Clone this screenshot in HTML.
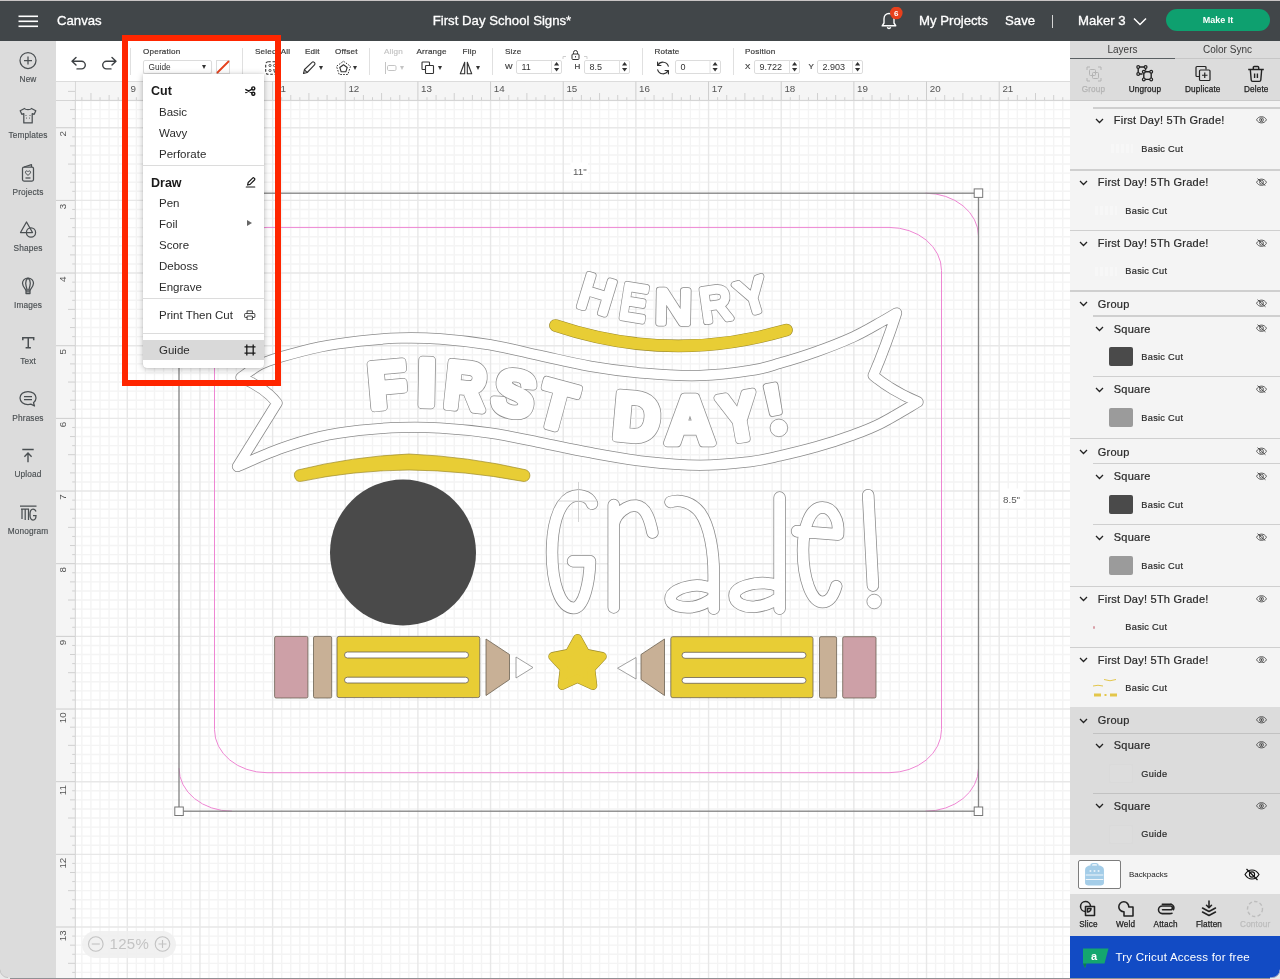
<!DOCTYPE html>
<html><head><meta charset="utf-8"><title>Cricut Design Space</title>
<style>
*{box-sizing:border-box;margin:0;padding:0}
html,body{width:1280px;height:979px;overflow:hidden;background:#fff}
body{position:relative;font-family:"Liberation Sans",sans-serif;color:#333;-webkit-font-smoothing:antialiased}
.abs{position:absolute}
body>*{will-change:transform}
#topbar{position:absolute;left:0;top:0;width:1280px;height:41px;background:#414649;border-top:1px solid #c9c5c5;color:#fff}
#topbar .t{position:absolute;top:0;height:40px;line-height:39px;font-size:13.2px;white-space:nowrap;color:#fff;-webkit-text-stroke:.3px #fff}
#sidebar{position:absolute;left:0;top:41px;width:56px;height:938px;background:#dcdcdc}
.sb{position:absolute;left:0;width:56px;text-align:center;font-size:8.300px;letter-spacing:.12px;color:#4a4f52;line-height:10px;-webkit-text-stroke:.15px currentColor}
.sbi{position:absolute;left:0;width:56px}
#toolbar{position:absolute;left:56px;top:41px;width:1014px;height:40px;background:#fff}
.tl{position:absolute;font-size:8.100px;letter-spacing:.2px;-webkit-text-stroke:.2px currentColor;color:#3a3a3a;line-height:9px;white-space:nowrap}
.inp{position:absolute;height:13px;border:1px solid #dcdcdc;border-radius:2px;background:#fff;font-size:9px;line-height:12px;color:#333;padding-left:4.500px}
.sep{position:absolute;top:48px;width:1px;height:27px;background:#e0e0e0}
#rp{position:absolute;left:1070px;top:41px;width:210px;height:938px;background:#f4f4f4;overflow:hidden}
</style></head><body>
<div id="topbar">
 <svg class="abs" style="left:18px;top:14px" width="20" height="13" viewBox="0 0 20 13"><g stroke="#fff" stroke-width="1.6"><line x1=".5" y1="1.300" x2="20" y2="1.300"/><line x1=".5" y1="6.300" x2="20" y2="6.300"/><line x1=".5" y1="11.300" x2="20" y2="11.300"/></g></svg>
 <div class="t" style="left:57px">Canvas</div>
 <div class="t" style="left:402px;width:200px;text-align:center">First Day School Signs*</div>
 <svg class="abs" style="left:878px;top:6px" width="28" height="28" viewBox="0 0 28 28"><path d="M11 6.5c-3 0-5 2.3-5 5.2v4.300l-1.800 2.800h13.600l-1.800-2.800v-4.300c0-2.900-2-5.200-5-5.200z" fill="none" stroke="#fff" stroke-width="1.4" stroke-linejoin="round"/><path d="M9.300 20.300a1.800 1.800 0 0 0 3.400 0" fill="none" stroke="#fff" stroke-width="1.300"/><circle cx="18.300" cy="6" r="6.300" fill="#e8401c"/><text x="18.300" y="8.900" font-size="8" font-weight="bold" fill="#fff" text-anchor="middle" font-family="Liberation Sans">6</text></svg>
 <div class="t" style="left:919px">My Projects</div>
 <div class="t" style="left:1005px">Save</div>
 <div class="abs" style="left:1051.500px;top:14px;width:1.300px;height:13px;background:#d4d4d4"></div>
 <div class="t" style="left:1078px">Maker 3</div>
 <svg class="abs" style="left:1133px;top:16px" width="14" height="9" viewBox="0 0 14 9"><path d="M1 1.500l6 6 6-6" fill="none" stroke="#fff" stroke-width="1.500"/></svg>
 <div class="abs" style="left:1166px;top:8px;width:104px;height:22px;border-radius:11px;background:#0ea06f;color:#fff;font-size:9px;font-weight:bold;text-align:center;line-height:22px">Make It</div>
</div>
<div id="sidebar">
 <!-- New -->
 <svg class="sbi" style="top:9px" width="56" height="20" viewBox="0 0 56 20"><g fill="none" stroke="#4a4f52" stroke-width="1.250"><circle cx="28" cy="10.500" r="8"/><path d="M28 6.500v8M24 10.500h8"/></g></svg>
 <div class="sb" style="top:33px">New</div>
 <!-- Templates -->
 <svg class="sbi" style="top:65px" width="56" height="20" viewBox="0 0 56 20"><g fill="none" stroke="#4a4f52" stroke-width="1.250" stroke-linejoin="round"><path d="M24.500 2.500c1 1.600 6 1.600 7 0l4.300 2.200-1.600 3.600-2-.7v9.300h-8.400V7.600l-2 .7-1.600-3.600z"/><path d="M26 9.500h.01M30 9.500h.01M26.500 12h.01M29.500 12h.01" stroke-linecap="round" stroke-width="1.200"/></g></svg>
 <div class="sb" style="top:89px">Templates</div>
 <!-- Projects -->
 <svg class="sbi" style="top:121px" width="56" height="22" viewBox="0 0 56 22"><g fill="none" stroke="#4a4f52" stroke-width="1.250" stroke-linejoin="round"><rect x="22.500" y="5" width="11" height="14" rx="1.500"/><path d="M24 5l7.500-2.300V5"/><path d="M28 13.300c-1.400-1-2.600-2-2.600-3.100 0-1.500 2-1.800 2.600-.5.600-1.300 2.600-1 2.600.5 0 1.100-1.200 2.100-2.600 3.100z" stroke-width="1"/><path d="M25.500 16h5"/></g></svg>
 <div class="sb" style="top:146px">Projects</div>
 <!-- Shapes -->
 <svg class="sbi" style="top:178px" width="56" height="22" viewBox="0 0 56 22"><g fill="none" stroke="#4a4f52" stroke-width="1.250" stroke-linejoin="round"><path d="M26.500 3l6 10.500h-12z"/><circle cx="31" cy="13.500" r="4.600"/></g></svg>
 <div class="sb" style="top:202px">Shapes</div>
 <!-- Images -->
 <svg class="sbi" style="top:234px" width="56" height="22" viewBox="0 0 56 22"><g fill="none" stroke="#4a4f52" stroke-width="1.250" stroke-linejoin="round"><path d="M28 3c-3.300 0-5.500 2.500-5.500 5.300 0 2.700 2 4.700 3.500 6.700h4c1.500-2 3.500-4 3.500-6.700C33.500 5.500 31.300 3 28 3z"/><path d="M28 3c-1.600 1.200-2.300 3.300-2.300 5.300s.8 4.500 1.500 6.700M28 3c1.600 1.200 2.300 3.300 2.300 5.300s-.8 4.500-1.500 6.700"/><path d="M26 15v3.500h4V15M26 16.800h4"/></g></svg>
 <div class="sb" style="top:259px">Images</div>
 <!-- Text -->
 <svg class="sbi" style="top:291px" width="56" height="22" viewBox="0 0 56 22"><g fill="none" stroke="#4a4f52" stroke-width="1.500"><path d="M22.800 8.300V5.700h10.900V8.300M28.250 5.700v10M25.600 15.700h5.300"/></g></svg>
 <div class="sb" style="top:315px">Text</div>
 <!-- Phrases -->
 <svg class="sbi" style="top:347px" width="56" height="22" viewBox="0 0 56 22"><g fill="none" stroke="#4a4f52" stroke-width="1.250" stroke-linejoin="round"><path d="M28 3.500c-4.400 0-8 2.800-8 6.500s3.600 6.500 8 6.500c1 0 2-.15 2.900-.4l3.600 1.900-1-3.200c1.500-1.200 2.500-2.900 2.500-4.800 0-3.700-3.600-6.500-8-6.500z"/><path d="M24 8.500h8M24 11.500h8"/></g></svg>
 <div class="sb" style="top:372px">Phrases</div>
 <!-- Upload -->
 <svg class="sbi" style="top:404px" width="56" height="22" viewBox="0 0 56 22"><g fill="none" stroke="#4a4f52" stroke-width="1.400"><path d="M22.300 4.500h11.400M28 17.200V8.200M24.400 11.700l3.600-3.600 3.600 3.600"/></g></svg>
 <div class="sb" style="top:428px">Upload</div>
 <!-- Monogram -->
 <svg class="sbi" style="top:461px" width="56" height="22" viewBox="0 0 56 22"><g fill="none" stroke="#4a4f52" stroke-width="1.250"><path d="M20 4h16.500M21 7h8M22 7v10M25.200 7v11M28.500 7v11M36 9.500c-.5-1.600-1.500-2.500-3-2.500-2 0-3 1.800-3 5.500s1 5.500 3 5.500c1.800 0 3-1.300 3-4.500h-3"/></g></svg>
 <div class="sb" style="top:485px">Monogram</div>
</div>
<svg class="abs" style="left:56px;top:81px" width="1014" height="898" viewBox="56 81 1014 898" font-family="Liberation Sans" shape-rendering="auto">
<rect x="56" y="81" width="1014" height="898" fill="#fff"/>
<path d="M81.86 100V979M90.94 100V979M100.02 100V979M109.11 100V979M118.19 100V979M136.35 100V979M145.44 100V979M154.52 100V979M163.60 100V979M172.68 100V979M181.76 100V979M190.85 100V979M209.01 100V979M218.10 100V979M227.18 100V979M236.26 100V979M245.34 100V979M254.42 100V979M263.51 100V979M281.67 100V979M290.75 100V979M299.84 100V979M308.92 100V979M318.00 100V979M327.09 100V979M336.17 100V979M354.33 100V979M363.41 100V979M372.50 100V979M381.58 100V979M390.66 100V979M399.75 100V979M408.83 100V979M426.99 100V979M436.08 100V979M445.16 100V979M454.24 100V979M463.32 100V979M472.40 100V979M481.49 100V979M499.65 100V979M508.74 100V979M517.82 100V979M526.90 100V979M535.98 100V979M545.06 100V979M554.15 100V979M572.31 100V979M581.40 100V979M590.48 100V979M599.56 100V979M608.64 100V979M617.73 100V979M626.81 100V979M644.97 100V979M654.05 100V979M663.14 100V979M672.22 100V979M681.30 100V979M690.38 100V979M699.47 100V979M717.63 100V979M726.72 100V979M735.80 100V979M744.88 100V979M753.96 100V979M763.04 100V979M772.13 100V979M790.29 100V979M799.37 100V979M808.46 100V979M817.54 100V979M826.62 100V979M835.71 100V979M844.79 100V979M862.95 100V979M872.03 100V979M881.12 100V979M890.20 100V979M899.28 100V979M908.36 100V979M917.45 100V979M935.61 100V979M944.70 100V979M953.78 100V979M962.86 100V979M971.94 100V979M981.02 100V979M990.11 100V979M1008.27 100V979M1017.35 100V979M1026.44 100V979M1035.52 100V979M1044.60 100V979M1053.68 100V979M1062.77 100V979M75 100.49H1070M75 109.58H1070M75 118.66H1070M75 136.82H1070M75 145.91H1070M75 154.99H1070M75 164.07H1070M75 173.15H1070M75 182.24H1070M75 191.32H1070M75 209.48H1070M75 218.56H1070M75 227.65H1070M75 236.73H1070M75 245.81H1070M75 254.89H1070M75 263.98H1070M75 282.14H1070M75 291.23H1070M75 300.31H1070M75 309.39H1070M75 318.47H1070M75 327.56H1070M75 336.64H1070M75 354.80H1070M75 363.88H1070M75 372.97H1070M75 382.05H1070M75 391.13H1070M75 400.21H1070M75 409.30H1070M75 427.46H1070M75 436.55H1070M75 445.63H1070M75 454.71H1070M75 463.79H1070M75 472.88H1070M75 481.96H1070M75 500.12H1070M75 509.20H1070M75 518.29H1070M75 527.37H1070M75 536.45H1070M75 545.54H1070M75 554.62H1070M75 572.78H1070M75 581.87H1070M75 590.95H1070M75 600.03H1070M75 609.11H1070M75 618.19H1070M75 627.28H1070M75 645.44H1070M75 654.53H1070M75 663.61H1070M75 672.69H1070M75 681.77H1070M75 690.86H1070M75 699.94H1070M75 718.10H1070M75 727.18H1070M75 736.27H1070M75 745.35H1070M75 754.43H1070M75 763.51H1070M75 772.60H1070M75 790.76H1070M75 799.85H1070M75 808.93H1070M75 818.01H1070M75 827.09H1070M75 836.17H1070M75 845.26H1070M75 863.42H1070M75 872.50H1070M75 881.59H1070M75 890.67H1070M75 899.75H1070M75 908.84H1070M75 917.92H1070M75 936.08H1070M75 945.16H1070M75 954.25H1070M75 963.33H1070M75 972.41H1070" stroke="#f4f4f4" stroke-width="1.400" fill="none"/>
<path d="M127.27 100V979M199.93 100V979M272.59 100V979M345.25 100V979M417.91 100V979M490.57 100V979M563.23 100V979M635.89 100V979M708.55 100V979M781.21 100V979M853.87 100V979M926.53 100V979M999.19 100V979M1071.85 100V979M75 127.74H1070M75 200.40H1070M75 273.06H1070M75 345.72H1070M75 418.38H1070M75 491.04H1070M75 563.70H1070M75 636.36H1070M75 709.02H1070M75 781.68H1070M75 854.34H1070M75 927.00H1070" stroke="#e8e8e8" stroke-width="1.400" fill="none"/>
<!--ART-->
<rect x="56" y="81" width="1014" height="19.500" fill="#f5f5f5"/>
<rect x="56" y="81" width="19.500" height="898" fill="#f5f5f5"/>
<path d="M56 81.500H1070" stroke="#dcdcdc" stroke-width="1"/>
<path d="M56 100.400H1070M75.300 81V979" stroke="#d2d2d2" stroke-width="1" fill="none"/>
<path d="M81.86 97.200V100M90.94 93V100M100.02 97.200V100M109.11 95V100M118.19 97.200V100M136.35 97.200V100M145.44 95V100M154.52 97.200V100M163.60 93V100M172.68 97.200V100M181.76 95V100M190.85 97.200V100M209.01 97.200V100M218.10 95V100M227.18 97.200V100M236.26 93V100M245.34 97.200V100M254.42 95V100M263.51 97.200V100M281.67 97.200V100M290.75 95V100M299.84 97.200V100M308.92 93V100M318.00 97.200V100M327.09 95V100M336.17 97.200V100M354.33 97.200V100M363.41 95V100M372.50 97.200V100M381.58 93V100M390.66 97.200V100M399.75 95V100M408.83 97.200V100M426.99 97.200V100M436.08 95V100M445.16 97.200V100M454.24 93V100M463.32 97.200V100M472.40 95V100M481.49 97.200V100M499.65 97.200V100M508.74 95V100M517.82 97.200V100M526.90 93V100M535.98 97.200V100M545.06 95V100M554.15 97.200V100M572.31 97.200V100M581.40 95V100M590.48 97.200V100M599.56 93V100M608.64 97.200V100M617.73 95V100M626.81 97.200V100M644.97 97.200V100M654.05 95V100M663.14 97.200V100M672.22 93V100M681.30 97.200V100M690.38 95V100M699.47 97.200V100M717.63 97.200V100M726.72 95V100M735.80 97.200V100M744.88 93V100M753.96 97.200V100M763.04 95V100M772.13 97.200V100M790.29 97.200V100M799.37 95V100M808.46 97.200V100M817.54 93V100M826.62 97.200V100M835.71 95V100M844.79 97.200V100M862.95 97.200V100M872.03 95V100M881.12 97.200V100M890.20 93V100M899.28 97.200V100M908.36 95V100M917.45 97.200V100M935.61 97.200V100M944.70 95V100M953.78 97.200V100M962.86 93V100M971.94 97.200V100M981.02 95V100M990.11 97.200V100M1008.27 97.200V100M1017.35 95V100M1026.44 97.200V100M1035.52 93V100M1044.60 97.200V100M1053.68 95V100M1062.77 97.200V100M72.200 100.49H75M70 109.58H75M72.200 118.66H75M72.200 136.82H75M70 145.91H75M72.200 154.99H75M68 164.07H75M72.200 173.15H75M70 182.24H75M72.200 191.32H75M72.200 209.48H75M70 218.56H75M72.200 227.65H75M68 236.73H75M72.200 245.81H75M70 254.89H75M72.200 263.98H75M72.200 282.14H75M70 291.23H75M72.200 300.31H75M68 309.39H75M72.200 318.47H75M70 327.56H75M72.200 336.64H75M72.200 354.80H75M70 363.88H75M72.200 372.97H75M68 382.05H75M72.200 391.13H75M70 400.21H75M72.200 409.30H75M72.200 427.46H75M70 436.55H75M72.200 445.63H75M68 454.71H75M72.200 463.79H75M70 472.88H75M72.200 481.96H75M72.200 500.12H75M70 509.20H75M72.200 518.29H75M68 527.37H75M72.200 536.45H75M70 545.54H75M72.200 554.62H75M72.200 572.78H75M70 581.87H75M72.200 590.95H75M68 600.03H75M72.200 609.11H75M70 618.19H75M72.200 627.28H75M72.200 645.44H75M70 654.53H75M72.200 663.61H75M68 672.69H75M72.200 681.77H75M70 690.86H75M72.200 699.94H75M72.200 718.10H75M70 727.18H75M72.200 736.27H75M68 745.35H75M72.200 754.43H75M70 763.51H75M72.200 772.60H75M72.200 790.76H75M70 799.85H75M72.200 808.93H75M68 818.01H75M72.200 827.09H75M70 836.17H75M72.200 845.26H75M72.200 863.42H75M70 872.50H75M72.200 881.59H75M68 890.67H75M72.200 899.75H75M70 908.84H75M72.200 917.92H75M72.200 936.08H75M70 945.16H75M72.200 954.25H75M68 963.33H75M72.200 972.41H75" stroke="#d0d0d0" stroke-width="1" fill="none"/>
<path d="M127.27 81.500V100M199.93 81.500V100M272.59 81.500V100M345.25 81.500V100M417.91 81.500V100M490.57 81.500V100M563.23 81.500V100M635.89 81.500V100M708.55 81.500V100M781.21 81.500V100M853.87 81.500V100M926.53 81.500V100M999.19 81.500V100M1071.85 81.500V100M56 127.74H75M56 200.40H75M56 273.06H75M56 345.72H75M56 418.38H75M56 491.04H75M56 563.70H75M56 636.36H75M56 709.02H75M56 781.68H75M56 854.34H75M56 927.00H75" stroke="#cdcdcd" stroke-width="1" fill="none"/>
<text x="130.5" y="92.300" font-size="9.800" fill="#555">9</text>
<text x="203.1" y="92.300" font-size="9.800" fill="#555">10</text>
<text x="275.8" y="92.300" font-size="9.800" fill="#555">11</text>
<text x="348.4" y="92.300" font-size="9.800" fill="#555">12</text>
<text x="421.1" y="92.300" font-size="9.800" fill="#555">13</text>
<text x="493.8" y="92.300" font-size="9.800" fill="#555">14</text>
<text x="566.4" y="92.300" font-size="9.800" fill="#555">15</text>
<text x="639.1" y="92.300" font-size="9.800" fill="#555">16</text>
<text x="711.8" y="92.300" font-size="9.800" fill="#555">17</text>
<text x="784.4" y="92.300" font-size="9.800" fill="#555">18</text>
<text x="857.1" y="92.300" font-size="9.800" fill="#555">19</text>
<text x="929.7" y="92.300" font-size="9.800" fill="#555">20</text>
<text x="1002.4" y="92.300" font-size="9.800" fill="#555">21</text>
<text transform="translate(66.4 131.1) rotate(-90)" font-size="9.800" fill="#555" text-anchor="end">2</text>
<text transform="translate(66.4 203.8) rotate(-90)" font-size="9.800" fill="#555" text-anchor="end">3</text>
<text transform="translate(66.4 276.5) rotate(-90)" font-size="9.800" fill="#555" text-anchor="end">4</text>
<text transform="translate(66.4 349.1) rotate(-90)" font-size="9.800" fill="#555" text-anchor="end">5</text>
<text transform="translate(66.4 421.8) rotate(-90)" font-size="9.800" fill="#555" text-anchor="end">6</text>
<text transform="translate(66.4 494.4) rotate(-90)" font-size="9.800" fill="#555" text-anchor="end">7</text>
<text transform="translate(66.4 567.1) rotate(-90)" font-size="9.800" fill="#555" text-anchor="end">8</text>
<text transform="translate(66.4 639.8) rotate(-90)" font-size="9.800" fill="#555" text-anchor="end">9</text>
<text transform="translate(66.4 712.4) rotate(-90)" font-size="9.800" fill="#555" text-anchor="end">10</text>
<text transform="translate(66.4 785.1) rotate(-90)" font-size="9.800" fill="#555" text-anchor="end">11</text>
<text transform="translate(66.4 857.7) rotate(-90)" font-size="9.800" fill="#555" text-anchor="end">12</text>
<text transform="translate(66.4 930.4) rotate(-90)" font-size="9.800" fill="#555" text-anchor="end">13</text>
<rect x="56" y="82" width="18.800" height="18" fill="#f5f5f5"/>
<path d="M68 91.400H75" stroke="#d0d0d0" stroke-width="1" fill="none"/>
</svg>
<div id="toolbar"></div>
<!-- toolbar items use page coords -->
<div id="tb" class="abs" style="left:0;top:0;width:1070px;height:81px">
 <svg class="abs" style="left:68px;top:54px" width="52" height="20" viewBox="0 0 52 20"><g fill="none" stroke="#3c4043" stroke-width="1.400" stroke-linecap="round" stroke-linejoin="round"><path d="M8 3.500L4 7.300l4 3.800M4.300 7.300h9.200a3.800 3.800 0 0 1 0 7.600H9"/><path d="M44 3.500l4 3.800-4 3.800M47.700 7.300h-9.200a3.800 3.800 0 0 0 0 7.600H43"/></g></svg>
 <div class="sep" style="left:130px"></div>
 <div class="tl" style="left:143px;top:47px">Operation</div>
 <div class="inp" style="left:143px;top:60px;width:69px;height:14px;font-size:8.300px;box-shadow:0 1px 1px rgba(0,0,0,.08)">Guide</div>
 <div class="abs" style="left:201.500px;top:65px;width:0;height:0;border-left:2.800px solid transparent;border-right:2.800px solid transparent;border-top:4px solid #333"></div>
 <svg class="abs" style="left:216px;top:60px" width="14" height="14" viewBox="0 0 14 14"><rect x=".5" y=".5" width="13" height="13" fill="#fff" stroke="#dcdcdc"/><path d="M1.500 12.500L12.500 1.500" stroke="#e5421d" stroke-width="1.800" stroke-linecap="round"/></svg>
 <div class="sep" style="left:242px"></div>
 <div class="tl" style="left:255px;top:47px">Select All</div>
 <svg class="abs" style="left:265px;top:61px" width="14" height="14" viewBox="0 0 14 14"><rect x=".7" y=".7" width="12.600" height="12.600" rx="2.500" fill="none" stroke="#333" stroke-width="1.100" stroke-dasharray="2.600 1.700"/><g fill="none" stroke="#333" stroke-width=".8"><circle cx="5" cy="4.500" r="1.100"/><circle cx="9.500" cy="4.500" r="1.100"/><circle cx="5" cy="9.500" r="1.100"/><path d="M8.500 8.500l3 1-1.300.6-.5 1.400z"/></g></svg>
 <div class="tl" style="left:305px;top:47px">Edit</div>
 <svg class="abs" style="left:302px;top:61px" width="15" height="14" viewBox="0 0 15 14"><g fill="none" stroke="#333" stroke-width="1.100" stroke-linejoin="round"><path d="M1.500 12.500l1-4L10 1.300c.6-.6 1.500-.6 2.100 0l.4.400c.6.600.6 1.500 0 2.100L5.200 11.500z"/><path d="M2.500 8.800l2.700 2.700"/></g></svg>
 <div class="abs" style="left:319px;top:66px;width:0;height:0;border-left:2.800px solid transparent;border-right:2.800px solid transparent;border-top:4px solid #333"></div>
 <div class="tl" style="left:335px;top:47px">Offset</div>
 <svg class="abs" style="left:335px;top:60px" width="17" height="16" viewBox="0 0 17 16"><g fill="none" stroke="#333" stroke-linejoin="round"><path d="M8.500 1.200l7 5.100-2.700 8.200H4.200L1.500 6.300z" stroke-width="1" stroke-dasharray="1.600 1.300"/><path d="M8.500 4.800l3.700 2.700-1.400 4.300H6.200L4.800 7.500z" stroke-width="1.100"/></g></svg>
 <div class="abs" style="left:353px;top:66px;width:0;height:0;border-left:2.800px solid transparent;border-right:2.800px solid transparent;border-top:4px solid #333"></div>
 <div class="sep" style="left:369px"></div>
 <div class="tl" style="left:384px;top:47px;color:#c4c4c4">Align</div>
 <svg class="abs" style="left:384px;top:61px" width="14" height="14" viewBox="0 0 14 14"><g fill="none" stroke="#c4c4c4" stroke-width="1"><path d="M1.500 1v12"/><rect x="3.500" y="4.500" width="8.500" height="5" rx="1.200"/></g></svg>
 <div class="abs" style="left:400px;top:66px;width:0;height:0;border-left:2.800px solid transparent;border-right:2.800px solid transparent;border-top:4px solid #c4c4c4"></div>
 <div class="tl" style="left:416.500px;top:47px">Arrange</div>
 <svg class="abs" style="left:421px;top:61px" width="14" height="14" viewBox="0 0 14 14"><g fill="none" stroke="#333" stroke-width="1.100" stroke-linejoin="round"><path d="M8.500 4.500V1.800c0-.5-.3-.8-.8-.8H1.800c-.5 0-.8.300-.8.800v5.900c0 .5.300.8.800.8h2.700"/><rect x="4.500" y="4.500" width="8" height="8" rx=".8"/></g></svg>
 <div class="abs" style="left:437.500px;top:66px;width:0;height:0;border-left:2.800px solid transparent;border-right:2.800px solid transparent;border-top:4px solid #333"></div>
 <div class="tl" style="left:462.500px;top:47px">Flip</div>
 <svg class="abs" style="left:459px;top:61px" width="14" height="14" viewBox="0 0 14 14"><g fill="none" stroke="#333" stroke-width="1.100" stroke-linejoin="round"><path d="M5.700 1.200v11.600H1.300z"/><path d="M8.300 1.200v11.600h4.400z"/></g></svg>
 <div class="abs" style="left:475.500px;top:66px;width:0;height:0;border-left:2.800px solid transparent;border-right:2.800px solid transparent;border-top:4px solid #333"></div>
 <div class="sep" style="left:492px"></div>
 <div class="tl" style="left:505px;top:47px">Size</div>
 <div class="tl" style="left:505px;top:62px;font-size:8px">W</div>
 <div class="inp" style="left:516px;top:60px;width:46px;height:14px">11</div>
 <div class="tl" style="left:574.500px;top:62px;font-size:8px">H</div>
 <div class="inp" style="left:584px;top:60px;width:46px;height:14px">8.5</div>
 <svg class="abs" style="left:562px;top:49px" width="26" height="12" viewBox="0 0 26 12"><g fill="none" stroke="#333" stroke-width="1"><rect x="10" y="5" width="7" height="5.500" rx="1" /><path d="M11.500 5V3.500a2 2 0 0 1 4 0V5"/><path d="M13.500 7v1.500" stroke-width=".9"/></g><path d="M1 10V7.500h3M25 10V7.500h-3" fill="none" stroke="#cfcfcf" stroke-width="1"/></svg>
 <div class="sep" style="left:642px"></div>
 <div class="tl" style="left:654.500px;top:47px">Rotate</div>
 <svg class="abs" style="left:655px;top:60px" width="16" height="16" viewBox="0 0 16 16"><g fill="none" stroke="#333" stroke-width="1.200" stroke-linecap="round" stroke-linejoin="round"><path d="M13.300 6.200A5.600 5.600 0 0 0 3 5.200M2.700 9.800A5.600 5.600 0 0 0 13 10.800"/><path d="M2.600 2.200v3.300h3.300M13.400 13.800v-3.300h-3.300"/></g></svg>
 <div class="inp" style="left:675px;top:60px;width:46px;height:14px">0</div>
 <div class="sep" style="left:732.500px"></div>
 <div class="tl" style="left:745px;top:47px">Position</div>
 <div class="tl" style="left:745px;top:62px;font-size:8px">X</div>
 <div class="inp" style="left:754px;top:60px;width:46px;height:14px">9.722</div>
 <div class="tl" style="left:808.500px;top:62px;font-size:8px">Y</div>
 <div class="inp" style="left:817px;top:60px;width:46px;height:14px">2.903</div>
 <!-- spinners -->
 <svg class="abs" style="left:0;top:0" width="1070" height="81" viewBox="0 0 1070 81"><g fill="#333"><path d="M554.0 65.500l2.600-3.600 2.600 3.600zM554.0 68l2.600 3.600 2.600-3.600zM622.0 65.500l2.600-3.600 2.600 3.600zM622.0 68l2.600 3.600 2.600-3.600zM712.5 65.500l2.600-3.600 2.600 3.600zM712.5 68l2.600 3.600 2.600-3.600zM792.0 65.500l2.600-3.600 2.600 3.600zM792.0 68l2.600 3.600 2.600-3.600zM855.0 65.500l2.600-3.600 2.600 3.600zM855.0 68l2.600 3.600 2.600-3.600z"/></g><path d="M551.500 60.500v13M619.500 60.500v13M710 60.500v13M789.500 60.500v13M852.500 60.500v13" stroke="#e2e2e2" stroke-width="1" fill="none"/></svg>
</div>
<svg class="abs" style="left:0;top:0" width="1070" height="979" viewBox="0 0 1070 979" font-family="Liberation Sans">
<path d="M179.0 236.2A53 43 0 0 1 232.0 193.2M925.5 193.2A53 43 0 0 1 978.5 236.2M978.5 768.2A53 43 0 0 1 925.5 811.2M232.0 811.2A53 43 0 0 1 179.0 768.2" fill="none" stroke="#ee86d3" stroke-width="1"/>
<rect x="214.500" y="227.400" width="727" height="545.300" rx="52.500" ry="43" fill="none" stroke="#ee86d3" stroke-width="1"/>
<path d="M555.500 325.500Q671 364 786.500 330" fill="none" stroke="#9c8a2a" stroke-width="12.7" stroke-linecap="round"/><path d="M555.500 325.500Q671 364 786.500 330" fill="none" stroke="#e8cd35" stroke-width="11.5" stroke-linecap="round"/>
<path d="M297.800 470Q352 456.500 409 454Q468 456.500 525.800 469.800A6 6 0 0 1 522 481.200Q465 470.500 409 470Q352 470.500 301.500 481.300A6 6 0 0 1 297.800 470Z" fill="#e8cd35" stroke="#9c8a2a" stroke-width=".7" stroke-linejoin="round"/>
<circle cx="403" cy="552.500" r="73" fill="#4a4a4a"/>
<rect x="274.6" y="636.4" width="33.3" height="61.6" rx="1.5" fill="#cda0a7" stroke="#6b6152" stroke-width=".8"/>
<rect x="313.5" y="636.4" width="18.2" height="61.6" rx="1.5" fill="#c8b096" stroke="#6b6152" stroke-width=".8"/>
<rect x="337.0" y="636.4" width="142.8" height="61.2" rx="2.0" fill="#e8cd35" stroke="#6b6152" stroke-width=".8"/>
<rect x="344.5" y="652.0" width="124.0" height="6.0" rx="3.0" fill="#fff" stroke="#6b6152" stroke-width=".8"/>
<rect x="344.5" y="677.2" width="124.0" height="5.8" rx="3.0" fill="#fff" stroke="#6b6152" stroke-width=".8"/>
<path d="M486 639V695.500L509.500 679.500V654.500Z" fill="#c8b096" stroke="#6b6152" stroke-width=".8" stroke-linejoin="round"/>
<path d="M516 657V678L533 667.500Z" fill="#fff" stroke="#8a8a8a" stroke-width=".8" stroke-linejoin="round"/>
<rect x="842.7" y="636.7" width="33.3" height="61.3" rx="1.5" fill="#cda0a7" stroke="#6b6152" stroke-width=".8"/>
<rect x="819.5" y="636.7" width="17.1" height="61.3" rx="1.5" fill="#c8b096" stroke="#6b6152" stroke-width=".8"/>
<rect x="670.8" y="636.7" width="142.2" height="61.0" rx="2.0" fill="#e8cd35" stroke="#6b6152" stroke-width=".8"/>
<rect x="682.0" y="652.3" width="124.0" height="6.0" rx="3.0" fill="#fff" stroke="#6b6152" stroke-width=".8"/>
<rect x="682.0" y="677.5" width="124.0" height="5.8" rx="3.0" fill="#fff" stroke="#6b6152" stroke-width=".8"/>
<path d="M664.500 639V695.500L641 679.500V654.500Z" fill="#c8b096" stroke="#6b6152" stroke-width=".8" stroke-linejoin="round"/>
<path d="M636 657.500V679L617.500 668.200Z" fill="#fff" stroke="#8a8a8a" stroke-width=".8" stroke-linejoin="round"/>
<path d="M577.5 638.5L585.7 653.2L602.2 656.5L590.8 668.8L592.8 685.5L577.5 678.5L562.2 685.5L564.2 668.8L552.8 656.5L569.3 653.2Z" fill="#9c8a2a" stroke="#9c8a2a" stroke-width="9" stroke-linejoin="round"/>
<path d="M577.5 638.5L585.7 653.2L602.2 656.5L590.8 668.8L592.8 685.5L577.5 678.5L562.2 685.5L564.2 668.8L552.8 656.5L569.3 653.2Z" fill="#e8cd35" stroke="#e8cd35" stroke-width="7.800" stroke-linejoin="round"/>
<path d="M241.0 377.5C244.2 375.3 253.5 367.9 260.0 364.5C266.5 361.1 270.0 360.1 280.0 357.2C290.0 354.3 306.7 349.6 320.0 346.9C333.3 344.2 346.7 342.5 360.0 341.0C373.3 339.5 386.7 338.4 400.0 338.0C413.3 337.6 425.0 337.8 440.0 338.9C455.0 340.0 473.3 342.0 490.0 344.8C506.7 347.6 523.3 351.9 540.0 355.5C556.7 359.1 572.5 363.2 590.0 366.2C607.5 369.2 626.7 371.8 645.0 373.3C663.3 374.9 682.5 375.9 700.0 375.5C717.5 375.1 736.7 372.7 750.0 370.6C763.3 368.6 768.9 366.4 780.0 363.2C791.1 360.0 804.5 355.9 816.8 351.5C829.1 347.1 842.9 341.7 853.6 336.8C864.3 331.9 874.0 326.0 881.1 322.0C888.2 318.0 893.9 314.5 896.5 313.0Q886 346 873.300 375.500Q892 391 918 402C911.9 405.5 891.8 417.8 881.1 423.2C870.4 428.6 864.3 430.8 853.6 434.7C842.9 438.6 829.1 443.2 816.8 446.7C804.5 450.2 791.1 453.4 780.0 455.9C768.9 458.4 763.3 460.1 750.0 461.7C736.7 463.2 717.5 465.2 700.0 465.2C682.5 465.2 663.3 463.6 645.0 461.5C626.7 459.4 607.5 455.8 590.0 452.6C572.5 449.4 556.7 445.8 540.0 442.5C523.3 439.2 506.7 435.4 490.0 433.0C473.3 430.6 455.0 428.9 440.0 428.0C425.0 427.1 413.3 427.1 400.0 427.5C386.7 427.9 373.3 428.8 360.0 430.3C346.7 431.8 333.3 433.6 320.0 436.7C306.7 439.8 293.8 443.8 280.0 448.8C266.2 453.8 244.6 463.6 237.5 466.5L277 403Q266 388.500 241 377.500Z" fill="none" stroke="#8a8a8a" stroke-width="11.15" stroke-linecap="round" stroke-linejoin="round" /><path d="M241.0 377.5C244.2 375.3 253.5 367.9 260.0 364.5C266.5 361.1 270.0 360.1 280.0 357.2C290.0 354.3 306.7 349.6 320.0 346.9C333.3 344.2 346.7 342.5 360.0 341.0C373.3 339.5 386.7 338.4 400.0 338.0C413.3 337.6 425.0 337.8 440.0 338.9C455.0 340.0 473.3 342.0 490.0 344.8C506.7 347.6 523.3 351.9 540.0 355.5C556.7 359.1 572.5 363.2 590.0 366.2C607.5 369.2 626.7 371.8 645.0 373.3C663.3 374.9 682.5 375.9 700.0 375.5C717.5 375.1 736.7 372.7 750.0 370.6C763.3 368.6 768.9 366.4 780.0 363.2C791.1 360.0 804.5 355.9 816.8 351.5C829.1 347.1 842.9 341.7 853.6 336.8C864.3 331.9 874.0 326.0 881.1 322.0C888.2 318.0 893.9 314.5 896.5 313.0Q886 346 873.300 375.500Q892 391 918 402C911.9 405.5 891.8 417.8 881.1 423.2C870.4 428.6 864.3 430.8 853.6 434.7C842.9 438.6 829.1 443.2 816.8 446.7C804.5 450.2 791.1 453.4 780.0 455.9C768.9 458.4 763.3 460.1 750.0 461.7C736.7 463.2 717.5 465.2 700.0 465.2C682.5 465.2 663.3 463.6 645.0 461.5C626.7 459.4 607.5 455.8 590.0 452.6C572.5 449.4 556.7 445.8 540.0 442.5C523.3 439.2 506.7 435.4 490.0 433.0C473.3 430.6 455.0 428.9 440.0 428.0C425.0 427.1 413.3 427.1 400.0 427.5C386.7 427.9 373.3 428.8 360.0 430.3C346.7 431.8 333.3 433.6 320.0 436.7C306.7 439.8 293.8 443.8 280.0 448.8C266.2 453.8 244.6 463.6 237.5 466.5L277 403Q266 388.500 241 377.500Z" fill="none" stroke="#fff" stroke-width="9.65" stroke-linecap="round" stroke-linejoin="round" />
<!--TEXT-->
<rect x="179" y="193.200" width="799.500" height="618" fill="none" stroke="#868686" stroke-width="1.350"/>
<rect x="974.2" y="188.9" width="8.500" height="8.500" fill="#fff" stroke="#777" stroke-width="1"/>
<rect x="174.8" y="807.0" width="8.500" height="8.500" fill="#fff" stroke="#777" stroke-width="1"/>
<rect x="974.2" y="807.0" width="8.500" height="8.500" fill="#fff" stroke="#777" stroke-width="1"/>
<rect x="570.500" y="162.500" width="17.500" height="18" fill="#fff"/><text x="573" y="175.200" font-size="9.800" fill="#5a5a5a">11"</text>
<rect x="1000" y="488.500" width="23.500" height="19.700" fill="#fff"/><text x="1003" y="502.600" font-size="9.800" fill="#5a5a5a">8.5"</text>
</svg>
<svg class="abs" style="left:0;top:0" width="1070" height="979" viewBox="0 0 1070 979" font-family="Liberation Sans">
<g transform="translate(387.3 383.9) rotate(-5.0) scale(0.979 1)"><text text-anchor="middle" y="22.7" font-weight="bold" font-size="63.3" stroke-linejoin="round" stroke="#8a8a8a" stroke-width="8.5" fill="#8a8a8a">F</text><text text-anchor="middle" y="22.7" font-weight="bold" font-size="63.3" stroke-linejoin="round" stroke="#fff" stroke-width="7.0" fill="#fff">F</text></g>
<g transform="translate(426.8 381.6) rotate(1.0) scale(0.980 1)"><text text-anchor="middle" y="23.3" font-weight="bold" font-size="65.1" stroke-linejoin="round" stroke="#8a8a8a" stroke-width="8.5" fill="#8a8a8a">I</text><text text-anchor="middle" y="23.3" font-weight="bold" font-size="65.1" stroke-linejoin="round" stroke="#fff" stroke-width="7.0" fill="#fff">I</text></g>
<g transform="translate(465.7 385.2) rotate(6.0) scale(0.876 1)"><text text-anchor="middle" y="23.1" font-weight="bold" font-size="64.5" stroke-linejoin="round" stroke="#8a8a8a" stroke-width="8.5" fill="#8a8a8a">R</text><text text-anchor="middle" y="23.1" font-weight="bold" font-size="64.5" stroke-linejoin="round" stroke="#fff" stroke-width="7.0" fill="#fff">R</text></g>
<g transform="translate(514.5 392.7) rotate(12.0) scale(0.985 1)"><text text-anchor="middle" y="22.2" font-weight="bold" font-size="61.9" stroke-linejoin="round" stroke="#8a8a8a" stroke-width="8.5" fill="#8a8a8a">S</text><text text-anchor="middle" y="22.2" font-weight="bold" font-size="61.9" stroke-linejoin="round" stroke="#fff" stroke-width="7.0" fill="#fff">S</text></g>
<g transform="translate(557.2 405.0) rotate(15.0) scale(0.892 1)"><text text-anchor="middle" y="22.9" font-weight="bold" font-size="64.1" stroke-linejoin="round" stroke="#8a8a8a" stroke-width="8.5" fill="#8a8a8a">T</text><text text-anchor="middle" y="22.9" font-weight="bold" font-size="64.1" stroke-linejoin="round" stroke="#fff" stroke-width="7.0" fill="#fff">T</text></g>
<g transform="translate(636.9 416.2) rotate(5.0) scale(0.970 1)"><text text-anchor="middle" y="23.6" font-weight="bold" font-size="65.9" stroke-linejoin="round" stroke="#8a8a8a" stroke-width="8.5" fill="#8a8a8a">D</text><text text-anchor="middle" y="23.6" font-weight="bold" font-size="65.9" stroke-linejoin="round" stroke="#fff" stroke-width="7.0" fill="#fff">D</text></g>
<g transform="translate(690.1 419.2) rotate(0.0) scale(1.000 1)"><text text-anchor="middle" y="24.1" font-weight="bold" font-size="67.2" stroke-linejoin="round" stroke="#8a8a8a" stroke-width="8.5" fill="#8a8a8a">A</text><text text-anchor="middle" y="24.1" font-weight="bold" font-size="67.2" stroke-linejoin="round" stroke="#fff" stroke-width="7.0" fill="#fff">A</text></g>
<g transform="translate(738.7 416.2) rotate(-10.0) scale(0.872 1)"><text text-anchor="middle" y="23.2" font-weight="bold" font-size="64.8" stroke-linejoin="round" stroke="#8a8a8a" stroke-width="8.5" fill="#8a8a8a">Y</text><text text-anchor="middle" y="23.2" font-weight="bold" font-size="64.8" stroke-linejoin="round" stroke="#fff" stroke-width="7.0" fill="#fff">Y</text></g>
<g transform="translate(596.9 293.6) rotate(17.0) scale(0.982 1)"><text text-anchor="middle" y="17.4" font-weight="normal" font-size="48.5" stroke-linejoin="round" stroke="#8a8a8a" stroke-width="6.7" fill="#8a8a8a">H</text><text text-anchor="middle" y="17.4" font-weight="normal" font-size="48.5" stroke-linejoin="round" stroke="#fff" stroke-width="5.2" fill="#fff">H</text></g>
<g transform="translate(633.9 302.0) rotate(9.0) scale(0.805 1)"><text text-anchor="middle" y="17.6" font-weight="normal" font-size="49.1" stroke-linejoin="round" stroke="#8a8a8a" stroke-width="6.7" fill="#8a8a8a">E</text><text text-anchor="middle" y="17.6" font-weight="normal" font-size="49.1" stroke-linejoin="round" stroke="#fff" stroke-width="5.2" fill="#fff">E</text></g>
<g transform="translate(673.5 306.2) rotate(1.0) scale(1.064 1)"><text text-anchor="middle" y="17.1" font-weight="normal" font-size="47.9" stroke-linejoin="round" stroke="#8a8a8a" stroke-width="6.7" fill="#8a8a8a">N</text><text text-anchor="middle" y="17.1" font-weight="normal" font-size="47.9" stroke-linejoin="round" stroke="#fff" stroke-width="5.2" fill="#fff">N</text></g>
<g transform="translate(715.8 303.4) rotate(-8.0) scale(0.911 1)"><text text-anchor="middle" y="16.9" font-weight="normal" font-size="47.2" stroke-linejoin="round" stroke="#8a8a8a" stroke-width="6.7" fill="#8a8a8a">R</text><text text-anchor="middle" y="16.9" font-weight="normal" font-size="47.2" stroke-linejoin="round" stroke="#fff" stroke-width="5.2" fill="#fff">R</text></g>
<g transform="translate(752.0 295.6) rotate(-17.0) scale(0.968 1)"><text text-anchor="middle" y="16.8" font-weight="normal" font-size="47.0" stroke-linejoin="round" stroke="#8a8a8a" stroke-width="6.7" fill="#8a8a8a">Y</text><text text-anchor="middle" y="16.8" font-weight="normal" font-size="47.0" stroke-linejoin="round" stroke="#fff" stroke-width="5.2" fill="#fff">Y</text></g>
<g transform="translate(773.400 400.300) rotate(-11)"><path d="M-4.200 -14.500L4.200 -14.500L3.300 12.500L-3.300 12.500Z" fill="#8a8a8a" stroke="#8a8a8a" stroke-width="7.400" stroke-linejoin="round"/><path d="M-4.200 -14.500L4.200 -14.500L3.300 12.500L-3.300 12.500Z" fill="#fff" stroke="#fff" stroke-width="5.800" stroke-linejoin="round"/></g>
<circle cx="778.900" cy="427.900" r="8.800" fill="#fff" stroke="#8a8a8a" stroke-width=".8"/>
<path d="M592 503.750C588.750 495 577.500 493.750 570 497.500C557.500 505 552 527.500 552 552.500C552 582.500 560 608 573.750 608C583.750 608 589.500 582.500 590 561.250L573 561.250" fill="none" stroke="#8a8a8a" stroke-width="12.35" stroke-linecap="round" stroke-linejoin="round"/>
<path d="M592 503.750C588.750 495 577.500 493.750 570 497.500C557.500 505 552 527.500 552 552.500C552 582.500 560 608 573.750 608C583.750 608 589.500 582.500 590 561.250L573 561.250" fill="none" stroke="#fff" stroke-width="10.85" stroke-linecap="round" stroke-linejoin="round"/>
<path d="M613.750 505L613.750 607.500M613.750 523.750C616.250 512.500 627.500 505 636.250 505.750C646.250 507 650 520 652.500 532.500" fill="none" stroke="#8a8a8a" stroke-width="12.35" stroke-linecap="round" stroke-linejoin="round"/>
<path d="M613.750 505L613.750 607.500M613.750 523.750C616.250 512.500 627.500 505 636.250 505.750C646.250 507 650 520 652.500 532.500" fill="none" stroke="#fff" stroke-width="10.85" stroke-linecap="round" stroke-linejoin="round"/>
<path d="M670.500 502C680 498.750 692.500 502.500 700 512.500C710 526.250 713.750 552.500 713.750 575L713.750 608.750M713.750 589.500C705 585.500 697.500 585 692.500 585.750C680 587.500 670.500 592.500 670.500 598.750C670.500 606.250 682.500 608 692.500 607C702.500 605.500 708.750 601.250 713.750 597.500" fill="none" stroke="#8a8a8a" stroke-width="12.35" stroke-linecap="round" stroke-linejoin="round"/>
<path d="M670.500 502C680 498.750 692.500 502.500 700 512.500C710 526.250 713.750 552.500 713.750 575L713.750 608.750M713.750 589.500C705 585.500 697.500 585 692.500 585.750C680 587.500 670.500 592.500 670.500 598.750C670.500 606.250 682.500 608 692.500 607C702.500 605.500 708.750 601.250 713.750 597.500" fill="none" stroke="#fff" stroke-width="10.85" stroke-linecap="round" stroke-linejoin="round"/>
<path d="M779.600 497.500L779.600 608.750M779.500 586.250C770 582.500 762.500 582.500 755 583.500C742.500 585.500 734.500 590 734.500 595.500C734.500 603.750 745 607.500 755 606.750C765 605.750 772.500 602.500 779.500 597.500" fill="none" stroke="#8a8a8a" stroke-width="12.35" stroke-linecap="round" stroke-linejoin="round"/>
<path d="M779.600 497.500L779.600 608.750M779.500 586.250C770 582.500 762.500 582.500 755 583.500C742.500 585.500 734.500 590 734.500 595.500C734.500 603.750 745 607.500 755 606.750C765 605.750 772.500 602.500 779.500 597.500" fill="none" stroke="#fff" stroke-width="10.85" stroke-linecap="round" stroke-linejoin="round"/>
<path d="M797 531.250L838 534.500C839.500 520 832.500 507.500 822.500 507.500C810 507.500 803 527.500 803 550C803 577.500 811.250 602 822.500 602C830 602 833.750 595 836.250 586.250" fill="none" stroke="#8a8a8a" stroke-width="12.35" stroke-linecap="round" stroke-linejoin="round"/>
<path d="M797 531.250L838 534.500C839.500 520 832.500 507.500 822.500 507.500C810 507.500 803 527.500 803 550C803 577.500 811.250 602 822.500 602C830 602 833.750 595 836.250 586.250" fill="none" stroke="#fff" stroke-width="10.85" stroke-linecap="round" stroke-linejoin="round"/>
<path d="M868.200 495.200L872.900 585.500" fill="none" stroke="#8a8a8a" stroke-width="12.35" stroke-linecap="round" stroke-linejoin="round"/>
<path d="M868.200 495.200L872.900 585.500" fill="none" stroke="#fff" stroke-width="10.85" stroke-linecap="round" stroke-linejoin="round"/>
<circle cx="874.200" cy="601.500" r="7.300" fill="#fff" stroke="#8a8a8a" stroke-width=".8"/>
<path d="M578.500 482V522M559 501H597" stroke="#c9c9c9" stroke-width=".8" fill="none"/>
</svg>
<style>
#dd{position:absolute;left:143px;top:73.800px;width:121px;height:293.800px;background:#fff;border-radius:0 0 4px 4px;box-shadow:0 1px 6px rgba(0,0,0,.28),0 0 1px rgba(0,0,0,.2)}
#dd .h{position:absolute;left:8px;font-size:12.500px;font-weight:bold;color:#1a1a1a;line-height:16px}
#dd .i{position:absolute;left:16px;font-size:11.500px;color:#2b2b2b;line-height:14px;white-space:nowrap}
#dd .l{position:absolute;left:0;width:121px;height:1px;background:#dcdcdc}
#dd svg{position:absolute}
</style>
<div id="dd">
 <div class="h" style="top:9px">Cut</div>
 <div class="i" style="top:30.500px">Basic</div>
 <div class="i" style="top:51.500px">Wavy</div>
 <div class="i" style="top:72.500px">Perforate</div>
 <div class="l" style="top:90.500px"></div>
 <div class="h" style="top:100.500px">Draw</div>
 <div class="i" style="top:121.500px">Pen</div>
 <div class="i" style="top:142.500px">Foil</div>
 <div class="i" style="top:163.500px">Score</div>
 <div class="i" style="top:184.500px">Deboss</div>
 <div class="i" style="top:205.500px">Engrave</div>
 <div class="l" style="top:223.500px"></div>
 <div class="i" style="top:234px">Print Then Cut</div>
 <div class="l" style="top:258.500px"></div>
 <div class="abs" style="left:0;top:265.500px;width:121px;height:20px;background:#d9d9d9"></div>
 <div class="i" style="top:268.500px">Guide</div>
 <!-- scissors -->
 <svg style="left:101.500px;top:12px" width="11" height="10.200" viewBox="0 0 13 12"><g fill="none" stroke="#1a1a1a" stroke-width="1.700" stroke-linecap="round"><circle cx="9.800" cy="2.800" r="1.800"/><circle cx="9.800" cy="9.200" r="1.800"/><path d="M8.300 3.800L1 7.800M8.300 8.200L1 4.200"/></g></svg>
 <!-- draw pen -->
 <svg style="left:101.500px;top:103px" width="11" height="11" viewBox="0 0 13 13"><g fill="none" stroke="#1a1a1a" stroke-width="1.400" stroke-linejoin="round" stroke-linecap="round"><path d="M3 9.500l.8-3L9 1.300c.5-.5 1.200-.5 1.700 0l.5.500c.5.500.5 1.200 0 1.700L6 8.700z"/><path d="M1.500 11.800h10"/></g></svg>
 <!-- foil arrow -->
 <div class="abs" style="left:104px;top:145.500px;width:0;height:0;border-top:3.200px solid transparent;border-bottom:3.200px solid transparent;border-left:5px solid #666"></div>
 <!-- printer -->
 <svg style="left:101px;top:235.500px" width="11.500" height="10.600" viewBox="0 0 13 12"><g fill="none" stroke="#2b2b2b" stroke-width="1" stroke-linejoin="round"><path d="M3.500 4V1h6v3M3.500 8.500h-2a.8 .8 0 0 1-.8-.8V4.800a.8 .8 0 0 1 .8-.8h10a.8 .8 0 0 1 .8 .8v2.900a.8 .8 0 0 1-.8 .8h-2"/><rect x="3.500" y="6.800" width="6" height="4.400"/></g></svg>
 <!-- guide icon -->
 <svg style="left:100.500px;top:269.500px" width="12" height="12" viewBox="0 0 12 12"><g fill="none" stroke="#1a1a1a" stroke-width="1.300"><path d="M2.800 .5v11M9.200 .5v11M.5 2.800h11M.5 9.200h11"/></g></svg>
</div>
<div class="abs" style="left:122px;top:35px;width:159px;height:351px;border:6px solid #ff2600"></div>
<style>
#rp .row{position:absolute;left:0;width:210px;font-size:11px;color:#2b2b2b;white-space:nowrap}
#rp .tx{position:absolute;line-height:14px;font-size:11px;letter-spacing:.24px;-webkit-text-stroke:.22px currentColor;color:#2b2b2b;white-space:nowrap}
#rp .sm{position:absolute;line-height:12px;font-size:9.200px;letter-spacing:.3px;-webkit-text-stroke:.2px currentColor;color:#2b2b2b;white-space:nowrap}
#rp .ln{position:absolute;height:1.500px;background:#d0d0d0;right:0}
#rp .sw{position:absolute;width:24px;height:19px;border-radius:2px}
#rp .al{position:absolute;font-size:8.200px;letter-spacing:.15px;-webkit-text-stroke:.25px currentColor;line-height:10px;color:#222;text-align:center;width:60px;white-space:nowrap}
</style>
<div id="rp">
<div class="abs" style="left:0;top:0;width:210px;height:18px;background:#dcdcdc;border-bottom:1px solid #c6c6c6"></div>
<div class="abs" style="left:0;top:16.500px;width:105px;height:2px;background:#5a5f62"></div>
<div class="abs" style="left:0;top:2px;width:105px;text-align:center;font-size:10px;line-height:13px;color:#3a3a3a">Layers</div>
<div class="abs" style="left:105px;top:2px;width:105px;text-align:center;font-size:10px;line-height:13px;color:#3a3a3a">Color Sync</div>
<div class="abs" style="left:0;top:18px;width:210px;height:41.500px;background:#dcdcdc;border-bottom:1px solid #cacaca"></div>
<div class="al" style="left:-6.6px;top:43.500px;color:#b4b4b4">Group</div>
<div class="al" style="left:45.0px;top:43.500px;color:#222">Ungroup</div>
<div class="al" style="left:102.8px;top:43.500px;color:#222">Duplicate</div>
<div class="al" style="left:156.3px;top:43.500px;color:#222">Delete</div>
<svg class="abs" style="left:14px;top:23px" width="20" height="20" viewBox="0 0 20 20"><g fill="none" stroke="#b4b4b4" stroke-width="1"><path d="M3 6V3h3M14 3h3v3M17 14v3h-3M6 17H3v-3"/><rect x="5.500" y="5.500" width="6" height="6" rx="1"/><rect x="8.500" y="8.500" width="6" height="6" rx="1"/></g></svg>
<svg class="abs" style="left:64px;top:22px" width="22" height="22" viewBox="0 0 22 22"><g fill="none" stroke="#222" stroke-width="1.400"><path d="M4.200 4H11.600M4.200 4V11M11.600 4V7.500M4.200 11H8.500M9.800 8.800H17.200M9.800 8.800V16.400M17.200 8.800V16.400M9.800 16.400H17.200"/><g fill="#dcdcdc" stroke-width="1.200"><circle cx="4.200" cy="4" r="1.400"/><circle cx="11.600" cy="4" r="1.400"/><circle cx="4.200" cy="11" r="1.400"/><circle cx="9.800" cy="8.800" r="1.400"/><circle cx="17.200" cy="8.800" r="1.400"/><circle cx="9.800" cy="16.400" r="1.400"/><circle cx="17.200" cy="16.400" r="1.400"/></g></g></svg>
<svg class="abs" style="left:123px;top:23px" width="20" height="20" viewBox="0 0 20 20"><g fill="none" stroke="#222" stroke-width="1.200" stroke-linejoin="round"><path d="M13 5.500V3.500a1 1 0 0 0-1-1H4a1 1 0 0 0-1 1v8a1 1 0 0 0 1 1h2"/><rect x="6.500" y="6" width="10.500" height="10.500" rx="1"/><path d="M11.750 8.500v5.500M9 11.250h5.500"/></g></svg>
<svg class="abs" style="left:176px;top:22px" width="20" height="22" viewBox="0 0 20 22"><g fill="none" stroke="#222" stroke-width="1.400" stroke-linejoin="round"><path d="M2.200 6.500h15.600M7.300 6.500V4.500a1 1 0 0 1 1-1h3.400a1 1 0 0 1 1 1v2M4.300 6.500l.9 10.500a1.500 1.500 0 0 0 1.500 1.400h6.600a1.500 1.500 0 0 0 1.500-1.400l.9-10.500M8.600 10.500v4.500M11.400 10.500v4.500"/></g></svg>
<div class="abs" style="left:0;top:666.3px;width:210px;height:147.8px;background:#dcdcdc"></div>
<div class="ln" style="top:66.0px;left:22.5px;background:#cfcfcf"></div>
<svg class="abs" style="left:24.5px;top:76.7px" width="9" height="6" viewBox="0 0 9 6"><path d="M1 1l3.500 3.500L8 1" fill="none" stroke="#222" stroke-width="1.300"/></svg>
<div class="tx" style="left:43.8px;top:72.3px">First Day! 5Th Grade!</div>
<svg class="abs" style="left:186px;top:75.4px" width="11" height="7.600" viewBox="0 0 13 9"><g fill="none" stroke="#333" stroke-width=".9"><path d="M.6 4.500C2 2 4 .8 6.500.8S11 2 12.400 4.500C11 7 9 8.200 6.500 8.200S2 7 .6 4.500z"/><circle cx="6.500" cy="4.500" r="2.300"/><circle cx="6.500" cy="4.500" r=".7" fill="#333"/></g></svg>
<div class="sm" style="left:71.3px;top:101.6px">Basic Cut</div>
<div class="ln" style="top:128.2px;left:0.0px;background:#cfcfcf"></div>
<svg class="abs" style="left:8.5px;top:138.7px" width="9" height="6" viewBox="0 0 9 6"><path d="M1 1l3.500 3.500L8 1" fill="none" stroke="#222" stroke-width="1.300"/></svg>
<div class="tx" style="left:27.8px;top:134.3px">First Day! 5Th Grade!</div>
<svg class="abs" style="left:186px;top:137.0px" width="11" height="8.460" viewBox="0 0 13 10"><g fill="none" stroke="#333" stroke-width=".9"><path d="M.6 5C2 2.500 4 1.300 6.500 1.300S11 2.500 12.400 5C11 7.500 9 8.700 6.500 8.700S2 7.500 .6 5z"/><circle cx="6.500" cy="5" r="2.300"/><path d="M1.800 .8L11.200 9.200" stroke-width="1"/></g></svg>
<div class="sm" style="left:55.3px;top:163.7px">Basic Cut</div>
<div class="ln" style="top:188.7px;left:0.0px;background:#cfcfcf"></div>
<svg class="abs" style="left:8.5px;top:199.6px" width="9" height="6" viewBox="0 0 9 6"><path d="M1 1l3.500 3.500L8 1" fill="none" stroke="#222" stroke-width="1.300"/></svg>
<div class="tx" style="left:27.8px;top:195.2px">First Day! 5Th Grade!</div>
<svg class="abs" style="left:186px;top:197.9px" width="11" height="8.460" viewBox="0 0 13 10"><g fill="none" stroke="#333" stroke-width=".9"><path d="M.6 5C2 2.500 4 1.300 6.500 1.300S11 2.500 12.400 5C11 7.500 9 8.700 6.500 8.700S2 7.500 .6 5z"/><circle cx="6.500" cy="5" r="2.300"/><path d="M1.800 .8L11.200 9.200" stroke-width="1"/></g></svg>
<div class="sm" style="left:55.3px;top:224.3px">Basic Cut</div>
<div class="ln" style="top:249.2px;left:0.0px;background:#cfcfcf"></div>
<svg class="abs" style="left:8.5px;top:259.9px" width="9" height="6" viewBox="0 0 9 6"><path d="M1 1l3.500 3.500L8 1" fill="none" stroke="#222" stroke-width="1.300"/></svg>
<div class="tx" style="left:27.8px;top:255.5px">Group</div>
<svg class="abs" style="left:186px;top:258.2px" width="11" height="8.460" viewBox="0 0 13 10"><g fill="none" stroke="#333" stroke-width=".9"><path d="M.6 5C2 2.500 4 1.300 6.500 1.300S11 2.500 12.400 5C11 7.500 9 8.700 6.500 8.700S2 7.500 .6 5z"/><circle cx="6.500" cy="5" r="2.300"/><path d="M1.800 .8L11.200 9.200" stroke-width="1"/></g></svg>
<div class="ln" style="top:274.1px;left:22.5px;background:#cfcfcf"></div>
<svg class="abs" style="left:24.5px;top:285.0px" width="9" height="6" viewBox="0 0 9 6"><path d="M1 1l3.500 3.500L8 1" fill="none" stroke="#222" stroke-width="1.300"/></svg>
<div class="tx" style="left:43.8px;top:280.6px">Square</div>
<svg class="abs" style="left:186px;top:283.3px" width="11" height="8.460" viewBox="0 0 13 10"><g fill="none" stroke="#333" stroke-width=".9"><path d="M.6 5C2 2.500 4 1.300 6.500 1.300S11 2.500 12.400 5C11 7.500 9 8.700 6.500 8.700S2 7.500 .6 5z"/><circle cx="6.500" cy="5" r="2.300"/><path d="M1.800 .8L11.200 9.200" stroke-width="1"/></g></svg>
<div class="sm" style="left:71.3px;top:309.9px">Basic Cut</div>
<div class="sw" style="left:39px;top:306.3px;background:#4a4a4a"></div>
<div class="ln" style="top:334.8px;left:22.5px;background:#cfcfcf"></div>
<svg class="abs" style="left:24.5px;top:345.7px" width="9" height="6" viewBox="0 0 9 6"><path d="M1 1l3.500 3.500L8 1" fill="none" stroke="#222" stroke-width="1.300"/></svg>
<div class="tx" style="left:43.8px;top:341.3px">Square</div>
<svg class="abs" style="left:186px;top:344.0px" width="11" height="8.460" viewBox="0 0 13 10"><g fill="none" stroke="#333" stroke-width=".9"><path d="M.6 5C2 2.500 4 1.300 6.500 1.300S11 2.500 12.400 5C11 7.500 9 8.700 6.500 8.700S2 7.500 .6 5z"/><circle cx="6.500" cy="5" r="2.300"/><path d="M1.800 .8L11.200 9.200" stroke-width="1"/></g></svg>
<div class="sm" style="left:71.3px;top:370.5px">Basic Cut</div>
<div class="sw" style="left:39px;top:366.9px;background:#9b9b9b"></div>
<div class="ln" style="top:396.8px;left:0.0px;background:#cfcfcf"></div>
<svg class="abs" style="left:8.5px;top:408.0px" width="9" height="6" viewBox="0 0 9 6"><path d="M1 1l3.500 3.500L8 1" fill="none" stroke="#222" stroke-width="1.300"/></svg>
<div class="tx" style="left:27.8px;top:403.6px">Group</div>
<svg class="abs" style="left:186px;top:406.3px" width="11" height="8.460" viewBox="0 0 13 10"><g fill="none" stroke="#333" stroke-width=".9"><path d="M.6 5C2 2.500 4 1.300 6.500 1.300S11 2.500 12.400 5C11 7.500 9 8.700 6.500 8.700S2 7.500 .6 5z"/><circle cx="6.500" cy="5" r="2.300"/><path d="M1.800 .8L11.200 9.200" stroke-width="1"/></g></svg>
<div class="ln" style="top:421.6px;left:22.5px;background:#cfcfcf"></div>
<svg class="abs" style="left:24.5px;top:432.8px" width="9" height="6" viewBox="0 0 9 6"><path d="M1 1l3.500 3.500L8 1" fill="none" stroke="#222" stroke-width="1.300"/></svg>
<div class="tx" style="left:43.8px;top:428.4px">Square</div>
<svg class="abs" style="left:186px;top:431.1px" width="11" height="8.460" viewBox="0 0 13 10"><g fill="none" stroke="#333" stroke-width=".9"><path d="M.6 5C2 2.500 4 1.300 6.500 1.300S11 2.500 12.400 5C11 7.500 9 8.700 6.500 8.700S2 7.500 .6 5z"/><circle cx="6.500" cy="5" r="2.300"/><path d="M1.800 .8L11.200 9.200" stroke-width="1"/></g></svg>
<div class="sm" style="left:71.3px;top:457.9px">Basic Cut</div>
<div class="sw" style="left:39px;top:454.3px;background:#4a4a4a"></div>
<div class="ln" style="top:482.8px;left:22.5px;background:#cfcfcf"></div>
<svg class="abs" style="left:24.5px;top:493.5px" width="9" height="6" viewBox="0 0 9 6"><path d="M1 1l3.500 3.500L8 1" fill="none" stroke="#222" stroke-width="1.300"/></svg>
<div class="tx" style="left:43.8px;top:489.1px">Square</div>
<svg class="abs" style="left:186px;top:491.8px" width="11" height="8.460" viewBox="0 0 13 10"><g fill="none" stroke="#333" stroke-width=".9"><path d="M.6 5C2 2.500 4 1.300 6.500 1.300S11 2.500 12.400 5C11 7.500 9 8.700 6.500 8.700S2 7.500 .6 5z"/><circle cx="6.500" cy="5" r="2.300"/><path d="M1.800 .8L11.200 9.200" stroke-width="1"/></g></svg>
<div class="sm" style="left:71.3px;top:518.5px">Basic Cut</div>
<div class="sw" style="left:39px;top:514.9px;background:#9b9b9b"></div>
<div class="ln" style="top:544.8px;left:0.0px;background:#cfcfcf"></div>
<svg class="abs" style="left:8.5px;top:555.4px" width="9" height="6" viewBox="0 0 9 6"><path d="M1 1l3.500 3.500L8 1" fill="none" stroke="#222" stroke-width="1.300"/></svg>
<div class="tx" style="left:27.8px;top:551.0px">First Day! 5Th Grade!</div>
<svg class="abs" style="left:186px;top:554.1px" width="11" height="7.600" viewBox="0 0 13 9"><g fill="none" stroke="#333" stroke-width=".9"><path d="M.6 4.500C2 2 4 .8 6.500.8S11 2 12.400 4.500C11 7 9 8.200 6.500 8.200S2 7 .6 4.500z"/><circle cx="6.500" cy="4.500" r="2.300"/><circle cx="6.500" cy="4.500" r=".7" fill="#333"/></g></svg>
<div class="sm" style="left:55.3px;top:580.4px">Basic Cut</div>
<div class="ln" style="top:605.5px;left:0.0px;background:#cfcfcf"></div>
<svg class="abs" style="left:8.5px;top:616.1px" width="9" height="6" viewBox="0 0 9 6"><path d="M1 1l3.500 3.500L8 1" fill="none" stroke="#222" stroke-width="1.300"/></svg>
<div class="tx" style="left:27.8px;top:611.7px">First Day! 5Th Grade!</div>
<svg class="abs" style="left:186px;top:614.8px" width="11" height="7.600" viewBox="0 0 13 9"><g fill="none" stroke="#333" stroke-width=".9"><path d="M.6 4.500C2 2 4 .8 6.500.8S11 2 12.400 4.500C11 7 9 8.200 6.500 8.200S2 7 .6 4.500z"/><circle cx="6.500" cy="4.500" r="2.300"/><circle cx="6.500" cy="4.500" r=".7" fill="#333"/></g></svg>
<div class="sm" style="left:55.3px;top:641.1px">Basic Cut</div>
<svg class="abs" style="left:8.5px;top:676.7px" width="9" height="6" viewBox="0 0 9 6"><path d="M1 1l3.500 3.500L8 1" fill="none" stroke="#222" stroke-width="1.300"/></svg>
<div class="tx" style="left:27.8px;top:672.3px">Group</div>
<svg class="abs" style="left:186px;top:675.4px" width="11" height="7.600" viewBox="0 0 13 9"><g fill="none" stroke="#333" stroke-width=".9"><path d="M.6 4.500C2 2 4 .8 6.500.8S11 2 12.400 4.500C11 7 9 8.200 6.500 8.200S2 7 .6 4.500z"/><circle cx="6.500" cy="4.500" r="2.300"/><circle cx="6.500" cy="4.500" r=".7" fill="#333"/></g></svg>
<div class="ln" style="top:691.5px;left:22.5px;background:#c2c2c2"></div>
<svg class="abs" style="left:24.5px;top:701.5px" width="9" height="6" viewBox="0 0 9 6"><path d="M1 1l3.500 3.500L8 1" fill="none" stroke="#222" stroke-width="1.300"/></svg>
<div class="tx" style="left:43.8px;top:697.1px">Square</div>
<svg class="abs" style="left:186px;top:700.2px" width="11" height="7.600" viewBox="0 0 13 9"><g fill="none" stroke="#333" stroke-width=".9"><path d="M.6 4.500C2 2 4 .8 6.500.8S11 2 12.400 4.500C11 7 9 8.200 6.500 8.200S2 7 .6 4.500z"/><circle cx="6.500" cy="4.500" r="2.300"/><circle cx="6.500" cy="4.500" r=".7" fill="#333"/></g></svg>
<div class="sm" style="left:71.3px;top:726.6px">Guide</div>
<div class="sw" style="left:39px;top:723.0px;border:1px solid #dadada;background:#dddddd"></div>
<div class="ln" style="top:751.8px;left:22.5px;background:#c2c2c2"></div>
<svg class="abs" style="left:24.5px;top:762.4px" width="9" height="6" viewBox="0 0 9 6"><path d="M1 1l3.500 3.500L8 1" fill="none" stroke="#222" stroke-width="1.300"/></svg>
<div class="tx" style="left:43.8px;top:758.0px">Square</div>
<svg class="abs" style="left:186px;top:761.1px" width="11" height="7.600" viewBox="0 0 13 9"><g fill="none" stroke="#333" stroke-width=".9"><path d="M.6 4.500C2 2 4 .8 6.500.8S11 2 12.400 4.500C11 7 9 8.200 6.500 8.200S2 7 .6 4.500z"/><circle cx="6.500" cy="4.500" r="2.300"/><circle cx="6.500" cy="4.500" r=".7" fill="#333"/></g></svg>
<div class="sm" style="left:71.3px;top:787.4px">Guide</div>
<div class="sw" style="left:39px;top:783.8px;border:1px solid #dadada;background:#dddddd"></div>
<div class="abs" style="left:41px;top:103.0px;width:22px;height:9px;background:repeating-linear-gradient(90deg,rgba(255,255,255,.3) 0 3px,transparent 3px 5px)"></div>
<div class="abs" style="left:25px;top:165.1px;width:22px;height:9px;background:repeating-linear-gradient(90deg,rgba(255,255,255,.3) 0 3px,transparent 3px 5px)"></div>
<div class="abs" style="left:25px;top:225.7px;width:22px;height:9px;background:repeating-linear-gradient(90deg,rgba(255,255,255,.3) 0 3px,transparent 3px 5px)"></div>
<div class="abs" style="left:23px;top:584.8px;width:2px;height:3px;border-radius:1px;background:#d9a0a8"></div>
<svg class="abs" style="left:22px;top:637.0px" width="26" height="20" viewBox="0 0 26 20"><g fill="none" stroke="#e3c64a" stroke-width="1"><path d="M12 1.500q6 2.500 12 0" /><path d="M1 8q5-1.500 10 0"/></g><g fill="#e3c64a"><rect x="2" y="15.500" width="7" height="3"/><rect x="12.500" y="16" width="2" height="2"/><rect x="18" y="15.500" width="7" height="3"/></g></svg>
<div class="abs" style="left:0;top:814.1px;width:210px;height:39.500px;background:#f4f4f4"></div>
<div class="abs" style="left:8px;top:819.3px;width:43px;height:29px;background:#fff;border:1px solid #7d7d7d;border-radius:2px"></div>
<svg class="abs" style="left:11px;top:820.5px" width="27" height="26" viewBox="0 0 20 26" preserveAspectRatio="none"><g fill="#a4cde8"><path d="M3 8c0-3 2-4.500 4-4.500h6c2 0 4 1.500 4 4.500v13c0 1.500-1 2.500-2.500 2.500h-9C4 23.500 3 22.500 3 21z"/><path d="M7 4V2.500C7 1.500 8 1 10 1s3 .5 3 1.500V4h-1.200V2.800c0-.4-.7-.6-1.800-.6s-1.800.2-1.800.6V4z"/></g><g stroke="#fff" stroke-width=".7"><path d="M3.500 13h13M3.500 17.500h13"/></g><g fill="#fff"><circle cx="7" cy="9" r=".8"/><circle cx="10" cy="9" r=".8"/><circle cx="13" cy="9" r=".8"/></g></svg>
<div class="abs" style="left:59px;top:828.6px;font-size:8px;line-height:10px;color:#222">Backpacks</div>
<svg class="abs" style="left:174px;top:827.1px" width="16" height="13" viewBox="0 0 16 13"><g fill="none" stroke="#111" stroke-width="1.100"><path d="M1 6.500C2.800 3.300 5 2 8 2s5.200 1.300 7 4.500C13.200 9.700 11 11 8 11S2.800 9.700 1 6.500z"/><circle cx="8" cy="6.500" r="2.600"/><path d="M2.500 1l11 11" stroke-width="1.200"/></g></svg>
<div class="abs" style="left:0;top:853.3px;width:210px;height:42px;background:#dcdcdc"></div>
<div class="al" style="left:-11.6px;top:878.9px;color:#222">Slice</div>
<div class="al" style="left:25.6px;top:878.9px;color:#222">Weld</div>
<div class="al" style="left:65.6px;top:878.9px;color:#222">Attach</div>
<div class="al" style="left:109.0px;top:878.9px;color:#222">Flatten</div>
<div class="al" style="left:155.2px;top:878.9px;color:#bdbdbd">Contour</div>
<svg class="abs" style="left:9.4px;top:858.8px" width="18" height="18" viewBox="0 0 18 18"><g fill="none" stroke="#222" stroke-width="1.550" stroke-linejoin="round"><path d="M6 11.500A5 5 0 1 1 11.500 6"/><path d="M6.500 6.500h9v9h-9z"/><path d="M8.500 8.500h3.500a3.500 3.500 0 0 1-3.500 3.500z"/></g></svg>
<svg class="abs" style="left:46.6px;top:858.8px" width="18" height="18" viewBox="0 0 18 18"><g fill="none" stroke="#222" stroke-width="1.550" stroke-linejoin="round"><path d="M7 11.800A5 5 0 1 1 11.800 7H16v9H7z"/></g></svg>
<svg class="abs" style="left:85.6px;top:857.8px" width="20" height="18" viewBox="0 0 20 18"><g fill="none" stroke="#222" stroke-width="1.550" stroke-linecap="round"><path d="M6.500 10.800h8a1.900 1.900 0 0 0 0-3.800H6.300a3.800 3.800 0 0 0 0 7.600h8.200a5 5 0 0 0 1.500-.3"/><path d="M15 5.200a3.800 3.800 0 0 1 2.500 5.500" /><path d="M6.300 5.200H15"/></g></svg>
<svg class="abs" style="left:130.0px;top:858.8px" width="18" height="18" viewBox="0 0 18 18"><g fill="none" stroke="#222" stroke-width="1.550" stroke-linejoin="round" stroke-linecap="round"><path d="M9 1v6.500M6.500 5.200L9 7.700l2.500-2.500"/><path d="M2.500 8L9 11.500 15.500 8M2.500 12L9 15.500 15.500 12"/></g></svg>
<svg class="abs" style="left:176.2px;top:858.8px" width="18" height="18" viewBox="0 0 18 18"><circle cx="9" cy="9" r="7.500" fill="none" stroke="#bdbdbd" stroke-width="1.400" stroke-dasharray="3.400 2.300"/></svg>
<div class="abs" style="left:0;top:895.0px;width:210px;height:42px;background:#124bc4"></div>
<svg class="abs" style="left:12px;top:905.0px" width="28" height="24" viewBox="0 0 28 24"><path d="M1 2.500h25.500l-4 15H4.500l-1.500 4.500-2-4.500z" fill="#14a66f"/><path d="M1 17.500l2 4.500 1.500-4.500z" fill="#0b7d52"/><text x="12" y="13.500" font-size="11" font-weight="bold" fill="#fff" text-anchor="middle" font-family="Liberation Sans">a</text></svg>
<div class="abs" style="left:45.500px;top:909.0px;font-size:11.500px;letter-spacing:.22px;line-height:14px;color:#fff;white-space:nowrap">Try Cricut Access for free</div>
</div>
<!-- zoom control -->
<div class="abs" style="left:82px;top:930.500px;width:94px;height:27px;border-radius:13.500px;background:rgba(238,238,238,.85)"></div>
<svg class="abs" style="left:82px;top:930px" width="94" height="28" viewBox="0 0 94 28"><g fill="none" stroke="#c2c2c2" stroke-width="1.100"><circle cx="13.800" cy="14" r="7.300"/><path d="M9.800 14h8"/><circle cx="80.500" cy="14" r="7.300"/><path d="M76.500 14h8M80.500 10v8"/></g><text x="47.300" y="19.300" font-size="15" fill="#c4c4c4" text-anchor="middle" font-family="Liberation Sans" letter-spacing=".3">125%</text></svg>
<!-- window bottom edge + rounded corners -->
<div class="abs" style="left:0;top:977.600px;width:1280px;height:1.400px;background:#909094"></div>
<svg class="abs" style="left:0;top:969px" width="10" height="10" viewBox="0 0 10 10"><path d="M0 0V10H10V8.600H8A8 8 0 0 1 0 .6Z" fill="#e9e9e9"/><path d="M0 .6A8 8 0 0 0 8 8.600" fill="none" stroke="#c4c4c4" stroke-width="1"/></svg>
<svg class="abs" style="left:1270px;top:969px" width="10" height="10" viewBox="0 0 10 10"><path d="M10 0V10H0V8.600H2A8 8 0 0 0 10 .6Z" fill="#e9e9e9"/><path d="M10 .6A8 8 0 0 1 2 8.600" fill="none" stroke="#9aa0c0" stroke-width="1"/></svg>

</body></html>
